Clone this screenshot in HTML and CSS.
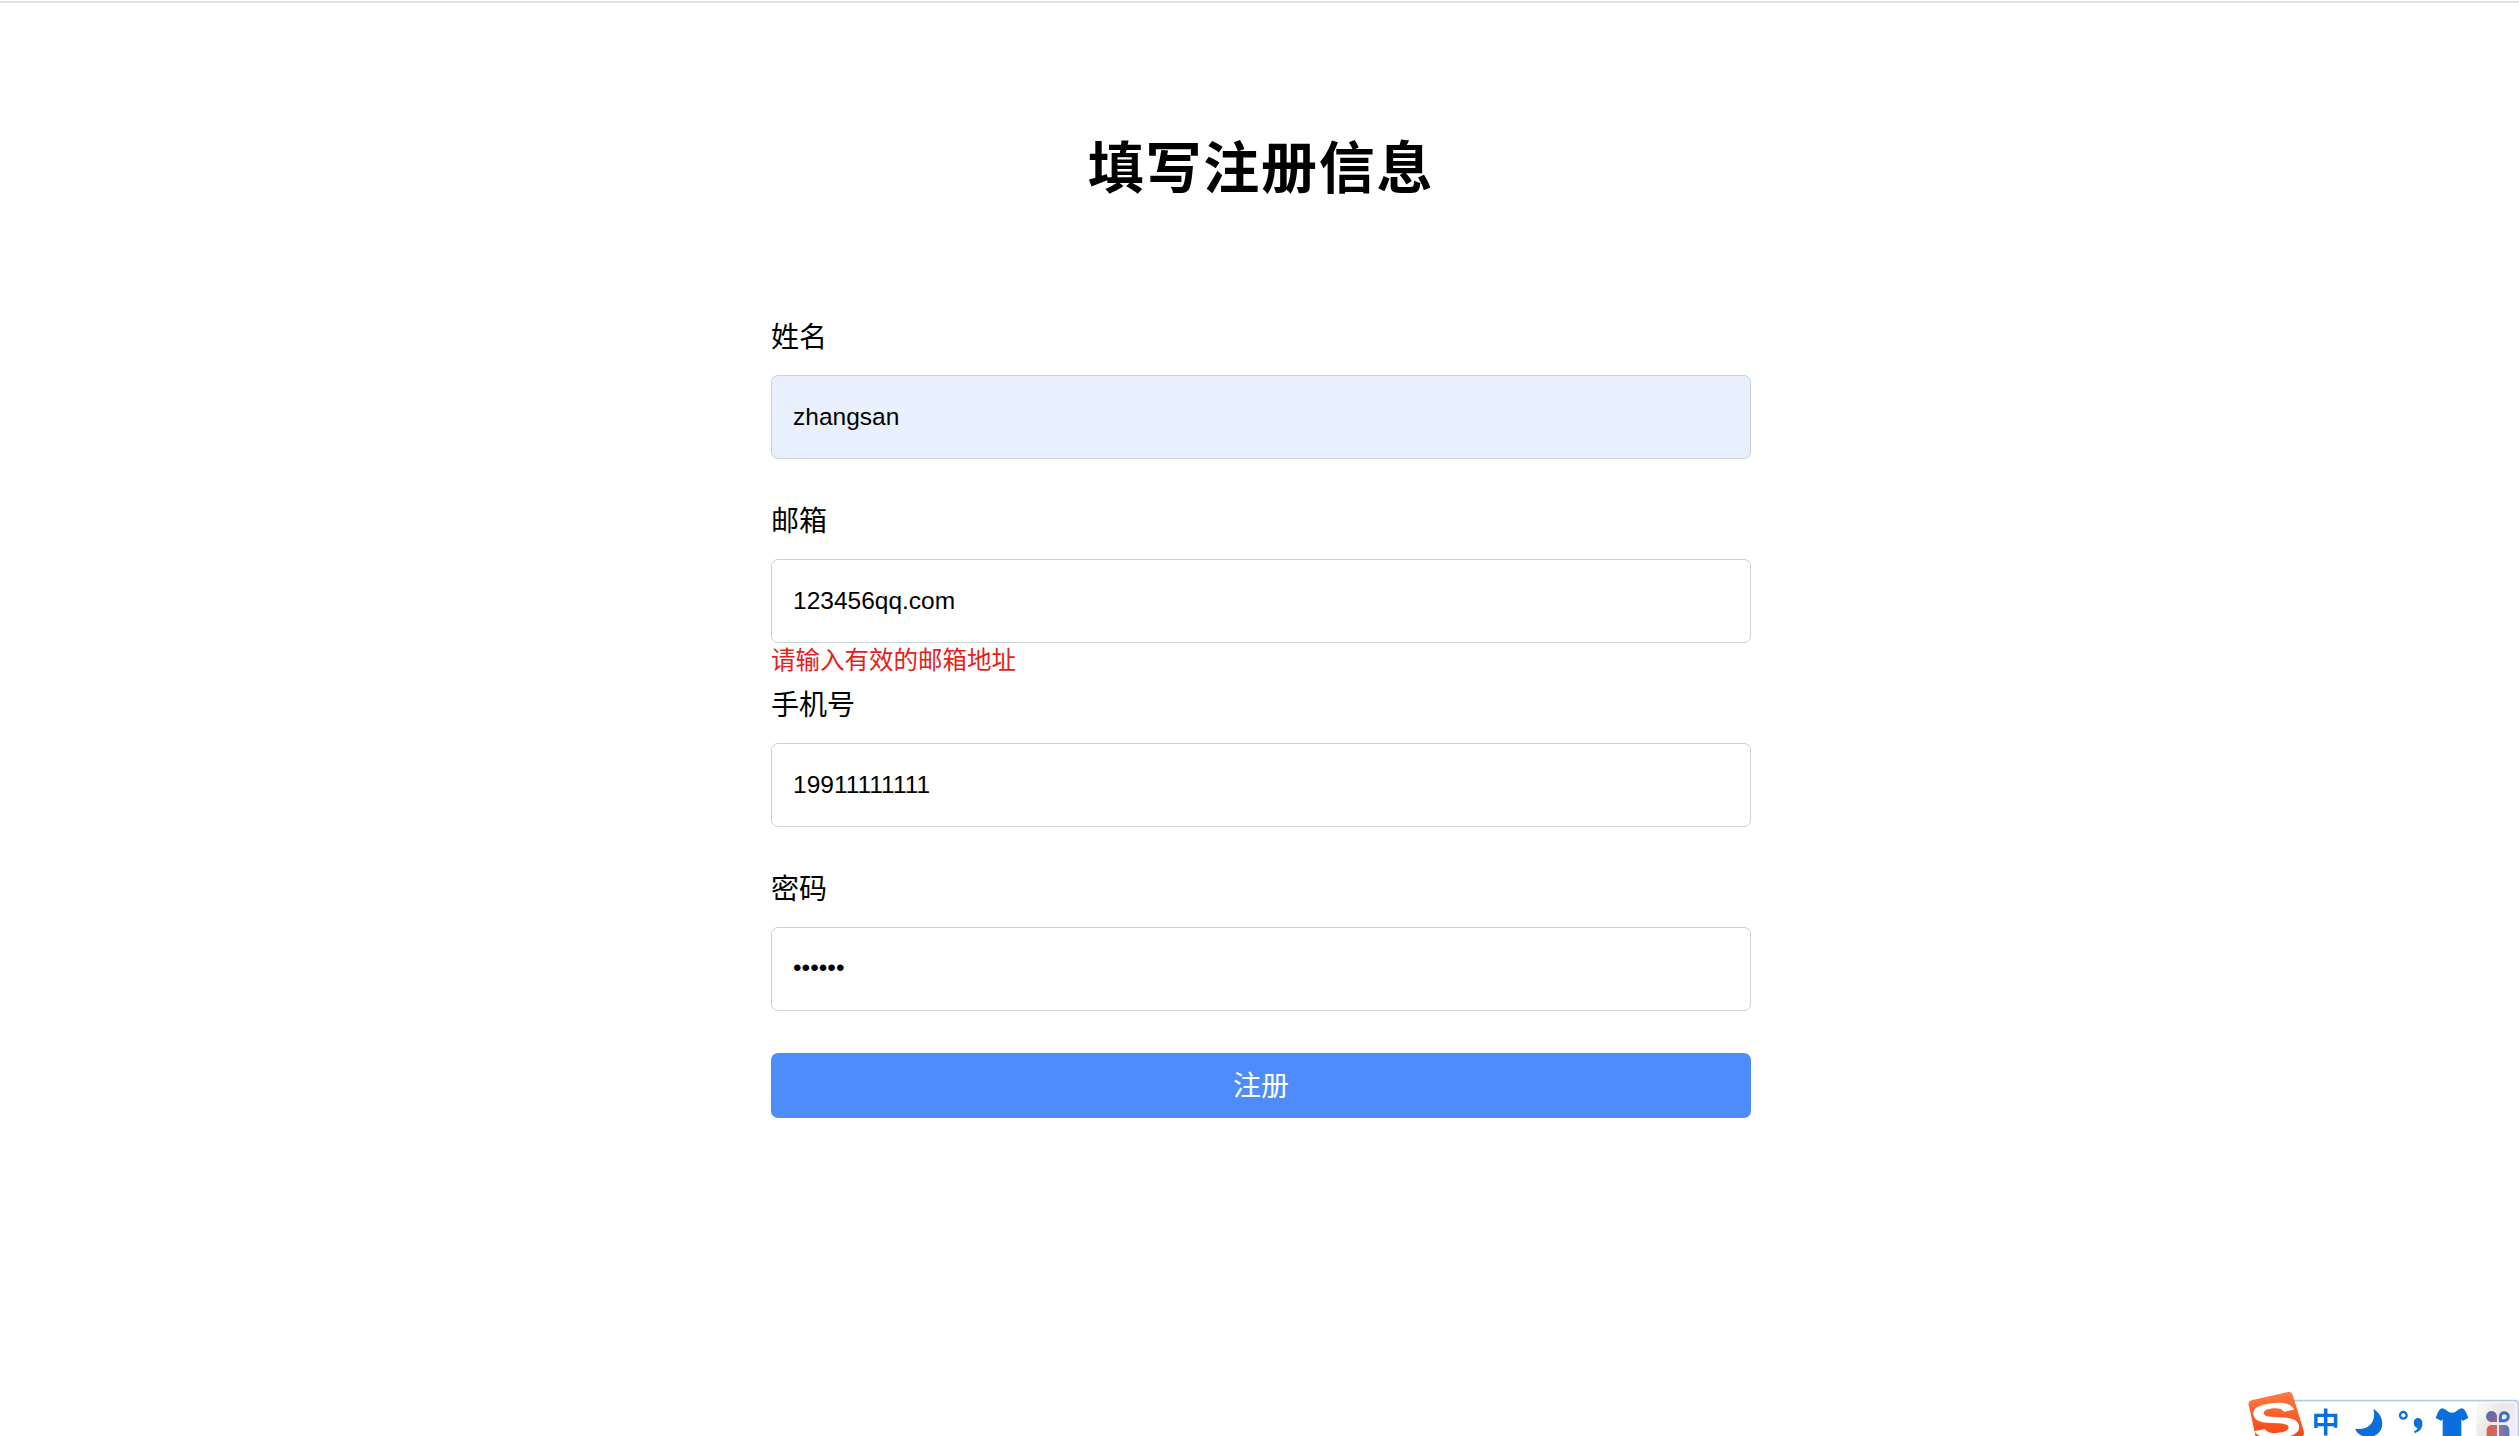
FILE: index.html
```html
<!DOCTYPE html>
<html lang="zh-CN">
<head>
    <meta charset="UTF-8">
    <meta name="viewport" content="width=device-width, initial-scale=1.0">
    <title>注册</title>
    <link rel="stylesheet" href="styles.css">
</head>
<body>
    <div class="container">
        <h1>填写注册信息</h1>

        <form class="register-form" novalidate>
            <div class="form-group">
                <label for="name">姓名</label>
                <input type="text" id="name" class="autofilled" value="zhangsan">
            </div>

            <div class="form-group">
                <label for="email">邮箱</label>
                <input type="text" id="email" value="123456qq.com">
                <div class="error">请输入有效的邮箱地址</div>
            </div>

            <div class="form-group">
                <label for="phone">手机号</label>
                <input type="text" id="phone" value="19911111111">
            </div>

            <div class="form-group">
                <label for="password">密码</label>
                <input type="password" id="password" value="123456">
            </div>

            <button type="submit" class="submit-btn">注册</button>
        </form>
    </div>

    <!-- input method bar -->
    <svg class="ime-bar" viewBox="0 0 840 150">
        <defs>
            <linearGradient id="logo" x1="0" y1="0" x2="0" y2="1">
                <stop offset="0" stop-color="#ff7a45"/>
                <stop offset="1" stop-color="#f4450c"/>
            </linearGradient>
            <linearGradient id="glow" x1="0" y1="0" x2="1" y2="0.6">
                <stop offset="0" stop-color="#fdfdf6"/>
                <stop offset="0.5" stop-color="#e9e9e4"/>
                <stop offset="1" stop-color="#f6e8fd"/>
            </linearGradient>
            <linearGradient id="petal" x1="0" y1="0" x2="1" y2="1">
                <stop offset="0" stop-color="#3f6fc4"/>
                <stop offset="1" stop-color="#a8627c"/>
            </linearGradient>
            <linearGradient id="petal-red" x1="0" y1="0" x2="1" y2="0">
                <stop offset="0" stop-color="#ee5a3c"/>
                <stop offset="1" stop-color="#b8707c"/>
            </linearGradient>
            <linearGradient id="petal-blue" x1="0" y1="0" x2="1" y2="0">
                <stop offset="0" stop-color="#9a7590"/>
                <stop offset="1" stop-color="#4a78c6"/>
            </linearGradient>
        </defs>
        <path d="M150 160V44H826Q838 44 838 56V160" fill="#fff" stroke="#b3cde6" stroke-width="5"/>
        <rect x="712" y="50" width="120" height="110" fill="url(#glow)"/>
        <path d="M38 43L148 18Q158 16 161 26L194 134Q197 144 188 160H52L29 57Q27 46 38 43Z" fill="url(#logo)"/>
        <text class="ime-logo" transform="translate(46 163) rotate(-6) skewX(6) scale(1.5 1)">S</text>
        <text class="ime-text" x="218" y="142">中</text>
        <path d="M403 69C443 91 438 150 390 153C370 154 355 144 348 128C386 136 414 108 403 69Z" fill="#0a6fdc"/>
        <circle cx="493" cy="88" r="10" fill="none" stroke="#0a6fdc" stroke-width="7"/>
        <path d="M525 114A13 13 0 1 1 550 110Q553 131 528 142L525 136Q536 131 536 126Q526 125 525 114Z" fill="#0a6fdc"/>
        <path d="M608 67Q616 67 622 73Q639 88 656 73Q662 67 670 67Q678 68 688 96L671 105L667 99V160H611V99L607 105L590 96Q600 68 608 67Z" fill="#0a6fdc"/>
        <path d="M774 108H759A16.500 16.500 0 1 1 774 90Z" fill="url(#petal)"/>
        <path d="M784 104V91A12 12 0 1 1 796 104Z" fill="none" stroke="#3f6fc4" stroke-width="9"/>
        <path d="M774 117V160H743V134Q743 117 759 117Z" fill="url(#petal-red)"/>
        <path d="M780 117H796Q811 117 811 134V160H780Z" fill="url(#petal-blue)"/>
    </svg>
</body>
</html>
```
FILE: styles.css
```css
* {
    margin: 0;
    padding: 0;
    box-sizing: border-box;
}

body {
    font-family: "Liberation Sans", "Noto Sans CJK SC", sans-serif;
    background-color: #fff;
    color: #000;
    height: 1436px;
    overflow: hidden;
    padding-top: 1px;
}

.container {
    border-top: 2px solid #e1e1e1;
    padding: 124px 0 0 3px;
}

h1 {
    text-align: center;
    font-size: 56px;
    line-height: 84px;
    letter-spacing: 1.75px;
    margin-bottom: 106px;
}

.register-form {
    width: 980px;
    margin: 0 auto;
}

.form-group {
    height: 184px;
}

label {
    display: block;
    font-size: 28px;
    line-height: 42px;
    margin-bottom: 16px;
}

input {
    display: block;
    width: 100%;
    height: 84px;
    padding: 0 21px;
    border: 1px solid #ccd0d8;
    border-radius: 7px;
    background-color: #fff;
    font-family: inherit;
    font-size: 24.5px;
    color: #000;
    outline: none;
}

input[type="password"] {
    padding-bottom: 2px;
}

.autofilled {
    background-color: #e8f0fe;
}

.error {
    font-size: 24.5px;
    line-height: 35px;
    color: #e6211c;
}

.submit-btn {
    display: block;
    width: 100%;
    height: 65px;
    padding-bottom: 4px;
    border: none;
    border-radius: 7px;
    background-color: #4e8cfb;
    color: #fff;
    font-family: inherit;
    font-size: 28px;
    cursor: pointer;
}

.ime-bar {
    position: fixed;
    right: 0;
    bottom: 0;
    width: 280px;
    height: 50px;
}

.ime-logo {
    font-family: "Liberation Sans", sans-serif;
    font-size: 150px;
    font-weight: bold;
    fill: #fff;
}

.ime-text {
    font-family: "Noto Sans CJK SC", sans-serif;
    font-size: 84px;
    font-weight: bold;
    fill: #0a6fdc;
}
```
